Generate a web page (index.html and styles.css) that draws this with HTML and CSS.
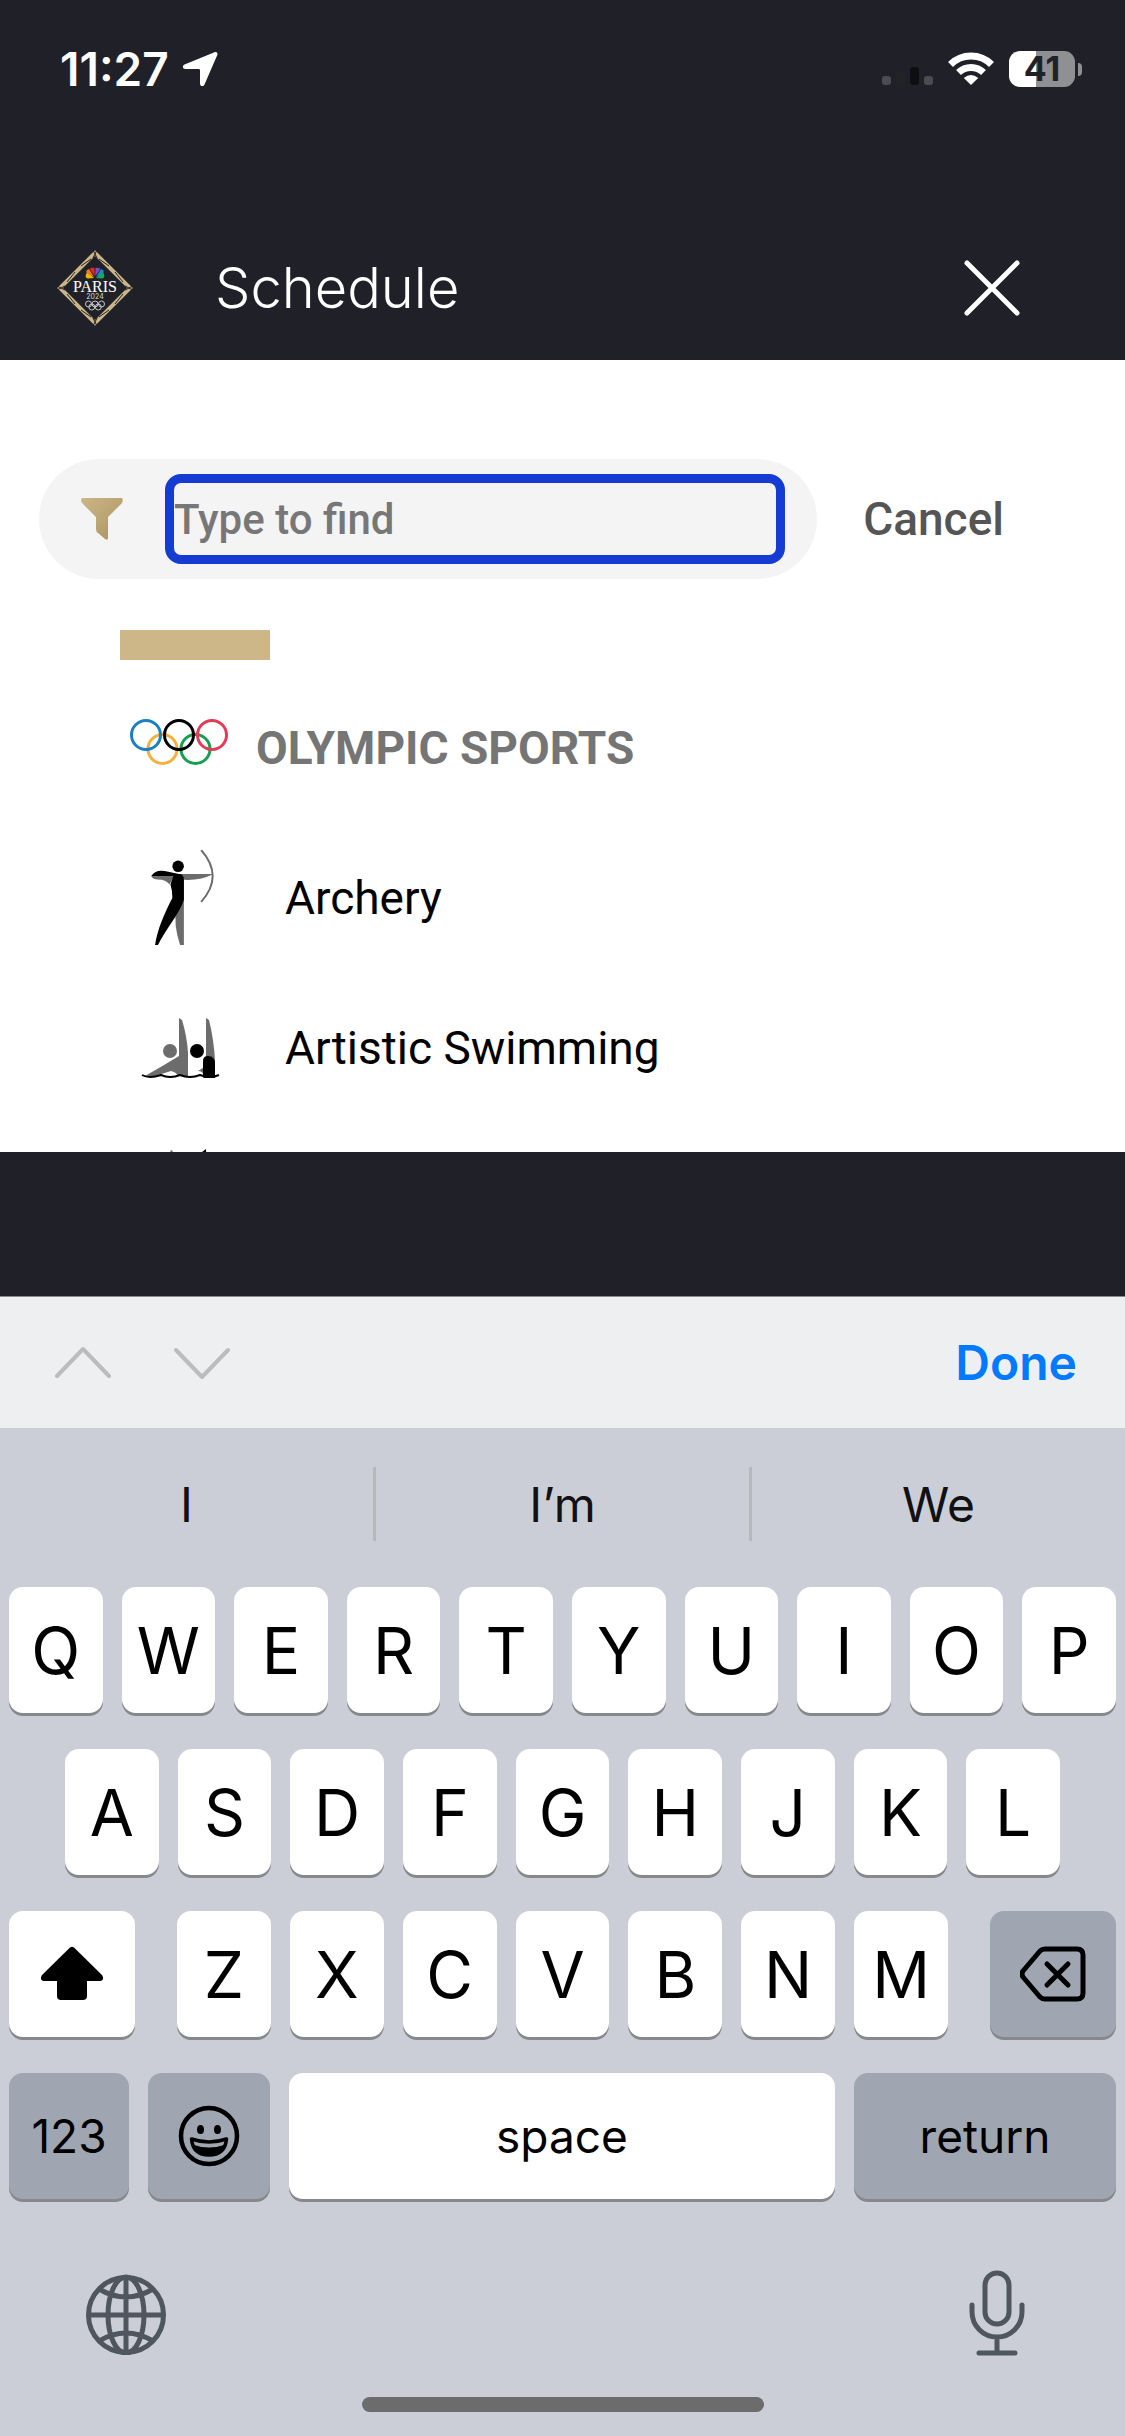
FILE: index.html
```html
<!DOCTYPE html>
<html lang="en">
<head>
    <meta charset="UTF-8">
    <meta name="viewport" content="width=device-width, initial-scale=1.0">
    <title>Schedule</title>
    <link rel="stylesheet" href="styles.css">
</head>
<body>
    <header class="header">
        <div class="status-bar">
            <div class="status-left">
                <span class="time">11:27</span>
                <svg width="38" height="38" viewBox="0 0 38 38" aria-hidden="true">
                    <path d="M33.500 2.200C35.500 1.300 37.200 3 36.300 5L23.500 34.500C22.500 37 19 36.500 19 33.700V20.200Q19 19 17.800 19H4.300C1.500 19 1 15.500 3.500 14.500Z" fill="#fff"/>
                </svg>
            </div>
            <div class="status-right">
                <svg width="54" height="36" viewBox="0 0 54 36" aria-hidden="true">
                    <rect x="0" y="25" width="9" height="9" rx="3" fill="#4b4b50"/>
                    <rect x="14" y="20" width="9" height="14" rx="3" fill="#222227"/>
                    <rect x="28" y="16" width="9" height="18" rx="3" fill="#0e0f13"/>
                    <rect x="42" y="25" width="9" height="9" rx="3" fill="#4b4b50"/>
                </svg>
                <svg class="wifi" width="46" height="36" viewBox="0 0 46 36" aria-hidden="true">
                    <g fill="none" stroke="#fff" stroke-width="7">
                        <path d="M2.500 13.500A29 29 0 0 1 43.500 13.500"/>
                        <path d="M10.500 21.500A18 18 0 0 1 35.500 21.500"/>
                    </g>
                    <path d="M23 34L15.800 27Q23 21 30.200 27Z" fill="#fff"/>
                </svg>
                <div class="battery"><span>41</span></div>
                <div class="battery-cap"></div>
            </div>
        </div>
        <div class="title-bar">
            <svg class="logo" width="76" height="76" viewBox="0 0 76 76" role="img" aria-label="NBC Paris 2024">
                <path d="M38 3L73 38L38 73L3 38Z" fill="none" stroke="#c9b587" stroke-width="4"/>
                <g fill="none" stroke="#202128" stroke-width="1">
                    <path d="M24 16L34 9M52 16L42 9M10 32L18 22M66 32L58 22M10 44L18 54M66 44L58 54M24 60L34 67M52 60L42 67"/>
                    <path d="M36 0L40 8M40 0L36 8M36 76L40 68M40 76L36 68M0 36L8 40M0 40L8 36M76 36L68 40M76 40L68 36"/>
                </g>
                <path d="M37 28L30 22Q27 28 31 28.500Z" fill="#f4b400"/>
                <path d="M37 27L32 19Q27 21 31 24Z" fill="#ef7a1a"/>
                <path d="M37.700 26L37.500 18Q31 17 34 21Z" fill="#e1262f"/>
                <path d="M38.300 26L38.500 18Q45 17 42 21Z" fill="#7950c4"/>
                <path d="M39 27L44 19Q49 21 45 24Z" fill="#1689d8"/>
                <path d="M39 28L46 22Q49 28 45 28.500Z" fill="#19aa57"/>
                <text class="logo-name" x="38" y="42" text-anchor="middle">PARIS</text>
                <text class="logo-year" x="38" y="49" text-anchor="middle">2024</text>
                <g fill="none" stroke="#c7c7ca" stroke-width="1">
                    <circle cx="31.500" cy="54" r="3"/>
                    <circle cx="38" cy="54" r="3"/>
                    <circle cx="44.500" cy="54" r="3"/>
                    <circle cx="34.800" cy="57" r="3"/>
                    <circle cx="41.300" cy="57" r="3"/>
                </g>
            </svg>
            <h1>Schedule</h1>
            <button class="close" aria-label="Close">
                <svg width="56" height="56" viewBox="0 0 56 56"><path d="M3 3L53 53M53 3L3 53" stroke="#fff" stroke-width="5" stroke-linecap="round"/></svg>
            </button>
        </div>
    </header>

    <main class="panel">
        <div class="search-row">
            <div class="search">
                <svg width="42" height="42" viewBox="0 0 42 42" aria-hidden="true">
                    <defs>
                        <linearGradient id="gold" x1="0" y1="0" x2="1" y2="1">
                            <stop offset="0" stop-color="#cdb687"/>
                            <stop offset="1" stop-color="#a8945f"/>
                        </linearGradient>
                    </defs>
                    <path d="M1 0H41Q42.500 2 41 5L27 19V40Q27 43 24 41L17 35Q15 34 15 31V19L1 5Q-1 2 1 0Z" fill="url(#gold)"/>
                </svg>
                <input type="text" placeholder="Type to find" aria-label="Type to find">
            </div>
            <button class="cancel">Cancel</button>
        </div>
        <div class="accent"></div>
        <div class="group">
            <svg width="98" height="48" viewBox="0 0 98 48" fill="none" stroke-width="3" aria-hidden="true">
                <circle cx="32.500" cy="31" r="14.500" stroke="#f4af3d"/>
                <circle cx="65.500" cy="31" r="14.500" stroke="#169f50"/>
                <circle cx="16" cy="17" r="14.500" stroke="#1b80c0"/>
                <circle cx="49" cy="17" r="14.500" stroke="#000"/>
                <circle cx="82" cy="17" r="14.500" stroke="#e23d58"/>
            </svg>
            <h2>OLYMPIC SPORTS</h2>
        </div>
        <ul class="sports">
            <li>
                <svg width="80" height="96" viewBox="0 0 80 100" aria-hidden="true">
                    <path d="M35 25L74 25Q60 32 43 31V99H39Q32 78 35 60Z" fill="#6c6c6c"/>
                    <path d="M9 27H33L28 36Q25 32 20 31Q10 31 9 27Z" fill="#6c6c6c"/>
                    <path d="M61 0Q85 27 61 54" fill="none" stroke="#6c6c6c" stroke-width="2"/>
                    <circle cx="37" cy="17" r="6" fill="#000"/>
                    <path d="M9 27Q14 20 23 22L38 25Q43 25 43 31V52C38 67 23 84 16 99H13C15 84 23 65 31 50Q31 42 29 36L32 27Z" fill="#000"/>
                </svg>
                <a href="#archery">Archery</a>
            </li>
            <li>
                <svg width="80" height="60" viewBox="0 0 80 60" aria-hidden="true">
                    <circle cx="29" cy="33" r="7" fill="#6c6c6c"/>
                    <path d="M38 0L41 2Q46 18 47 35V58H37Q35 54 30 53L14 58H4Q20 49 38 38Z" fill="#6c6c6c"/>
                    <circle cx="56" cy="33" r="7" fill="#000"/>
                    <path d="M65 0L68 2Q73 22 74 43V58H63Q62 53 57 53L65 48Z" fill="#6c6c6c"/>
                    <path d="M62 59V43Q62 38 67 38Q74 38 74 46V60H63Z" fill="#000"/>
                    <path d="M1 57Q8 61 20 57Q29 61 39 57Q49 61 59 57Q69 61 78 57" fill="none" stroke="#000" stroke-width="2"/>
                </svg>
                <a href="#artistic-swimming">Artistic Swimming</a>
            </li>
            <li>
                <svg width="80" height="98" viewBox="0 0 80 98" aria-hidden="true">
                    <path d="M29 2L31 1L33 6Z" fill="#6c6c6c"/>
                    <path d="M61 3L65 0L66 20L60 20Z" fill="#000"/>
                </svg>
            </li>
        </ul>
    </main>

    <section class="keyboard" aria-label="Keyboard">
        <div class="toolbar">
            <button aria-label="Previous field"><svg width="56" height="36" viewBox="0 0 56 36"><path d="M2 31L28 4L54 31"/></svg></button>
            <button aria-label="Next field"><svg width="56" height="36" viewBox="0 0 56 36"><path d="M2 5L28 32L54 5"/></svg></button>
            <button class="done">Done</button>
        </div>
        <div class="suggestions">
            <button>I</button>
            <button>I’m</button>
            <button>We</button>
        </div>
        <div class="keys">
            <div class="row">
                <button>Q</button><button>W</button><button>E</button><button>R</button><button>T</button><button>Y</button><button>U</button><button>I</button><button>O</button><button>P</button>
            </div>
            <div class="row row-home">
                <button>A</button><button>S</button><button>D</button><button>F</button><button>G</button><button>H</button><button>J</button><button>K</button><button>L</button>
            </div>
            <div class="row">
                <button class="shift" aria-label="Shift">
                    <svg width="64" height="56" viewBox="0 0 64 56"><path d="M30 1.500Q32 0 34 1.500L62 29Q65 34 60 35H47V50Q47 54 43 54H21Q17 54 17 50V35H4Q-1 34 2 29Z"/></svg>
                </button>
                <button>Z</button><button>X</button><button>C</button><button>V</button><button>B</button><button>N</button><button>M</button>
                <button class="delete gray" aria-label="Delete">
                    <svg width="66" height="56" viewBox="0 0 66 56" fill="none" stroke="#000" stroke-width="5" stroke-linecap="round" stroke-linejoin="round">
                        <path d="M25 3H57Q63 3 63 9V47Q63 53 57 53H25Q22 53 20 51L3 31Q1 28 3 25L20 5Q22 3 25 3Z"/>
                        <path d="M27 18L48 39M48 18L27 39"/>
                    </svg>
                </button>
            </div>
            <div class="row row-bottom">
                <button class="numbers gray">123</button>
                <button class="emoji gray" aria-label="Emoji">
                    <svg width="62" height="62" viewBox="0 0 62 62">
                        <circle cx="31" cy="31" r="28" fill="none" stroke="#000" stroke-width="4.500"/>
                        <ellipse cx="22.500" cy="24.500" rx="3.500" ry="4.500"/>
                        <ellipse cx="39.500" cy="24.500" rx="3.500" ry="4.500"/>
                        <path d="M13.500 34Q31 40 48.500 34Q47 50 31 50Q15 50 13.500 34Z" fill="none" stroke="#000" stroke-width="3.500" stroke-linejoin="round"/>
                        <path d="M16 40Q31 45 46 40Q42 50 31 50Q20 50 16 40Z"/>
                    </svg>
                </button>
                <button class="space">space</button>
                <button class="return gray">return</button>
            </div>
        </div>
        <div class="dock">
            <button aria-label="Next keyboard">
                <svg width="80" height="84" viewBox="0 0 80 84">
                    <circle cx="40" cy="44" r="37.500"/>
                    <ellipse cx="40" cy="44" rx="18" ry="38"/>
                    <path d="M40 6V82M2 44H78M13 18Q40 34 67 18M13 70Q40 54 67 70"/>
                </svg>
            </button>
            <button aria-label="Dictation">
                <svg width="56" height="86" viewBox="0 0 56 86" stroke-linecap="round">
                    <rect x="16" y="3" width="24" height="51" rx="12"/>
                    <path d="M3 35V42A25 25 0 0 0 53 42V35M28 67V83M10 83H46"/>
                </svg>
            </button>
        </div>
        <div class="home-indicator"></div>
    </section>
</body>
</html>
```

FILE: styles.css
```css
/* Basic Setup */
* {
    box-sizing: border-box;
}

body {
    margin: 0;
    background-color: #202128;
    font-family: Inter, "Liberation Sans", sans-serif;
    color: #000;
}

button {
    padding: 0;
    border: none;
    background: none;
    color: inherit;
    font: inherit;
    cursor: pointer;
}

svg {
    display: block;
    flex: none;
}

/* Header */
.header {
    color: #fff;
}

.status-bar {
    display: flex;
    justify-content: space-between;
    align-items: center;
    height: 138px;
    padding: 0 43px 0 60px;
}

.status-left,
.status-right {
    display: flex;
    align-items: center;
}

.status-left {
    gap: 12px;
}

.time {
    font-size: 46px;
    font-weight: 600;
}

.wifi {
    margin: 0 15px 0 12px;
}

.battery {
    width: 66px;
    height: 36px;
    border-radius: 11px;
    background: linear-gradient(90deg, #fff 27px, #8f9094 27px);
    color: #202128;
    font-size: 34px;
    font-weight: 700;
    line-height: 36px;
    text-align: center;
}

.battery-cap {
    width: 4px;
    height: 13px;
    margin-left: 3px;
    border-radius: 0 4px 4px 0;
    background-color: #8f9094;
}

.title-bar {
    display: flex;
    align-items: center;
    height: 222px;
    padding: 78px 105px 0 57px;
}

.logo-name {
    font-family: "Liberation Serif", serif;
    font-size: 16px;
    fill: #fff;
}

.logo-year {
    font-size: 7px;
    fill: #d9d9dc;
}

h1 {
    margin: 0 auto 0 82px;
    font-size: 56px;
    font-weight: 300;
}

/* Search panel */
.panel {
    height: 792px;
    padding: 99px 39px 0;
    overflow: hidden;
    background-color: #fff;
    font-family: Roboto, "Liberation Sans", sans-serif;
}

.search-row {
    display: flex;
    align-items: center;
    gap: 46px;
    padding-right: 82px;
}

.search {
    display: flex;
    flex: 1;
    align-items: center;
    gap: 42px;
    height: 120px;
    padding: 0 32px 0 42px;
    border-radius: 60px;
    background-color: #f4f4f4;
}

.search input {
    flex: 1;
    min-width: 0;
    height: 90px;
    padding: 0;
    border: 9px solid #153bd2;
    border-radius: 16px;
    outline: none;
    background: transparent;
    font-family: inherit;
    font-size: 42px;
    font-weight: 500;
}

.search input::placeholder {
    color: #777;
    opacity: 1;
}

.cancel {
    color: #555;
    font-size: 46px;
    font-weight: 500;
}

.accent {
    width: 150px;
    height: 30px;
    margin: 51px 0 0 81px;
    background-color: #cdb687;
}

.group {
    display: flex;
    align-items: center;
    gap: 28px;
    height: 163px;
    padding-left: 91px;
}

h2 {
    margin: 0;
    padding-top: 12px;
    color: #757575;
    font-size: 46px;
    font-weight: 700;
}

.sports {
    margin: 0;
    padding: 0;
    list-style: none;
}

.sports li {
    display: flex;
    align-items: center;
    gap: 64px;
    height: 150px;
    padding-left: 102px;
}

.sports a {
    color: #000;
    font-size: 46px;
    text-decoration: none;
}

/* Keyboard */
.keyboard {
    margin-top: 144px;
    padding-bottom: 24px;
    background-color: #cbced7;
}

.toolbar {
    display: flex;
    align-items: center;
    gap: 63px;
    height: 132px;
    padding: 0 48px 0 55px;
    border-top: 1px solid #88898c;
    background-color: #edeff1;
}

.toolbar svg {
    fill: none;
    stroke: #babcbd;
    stroke-width: 4;
    stroke-linecap: round;
    stroke-linejoin: round;
}

.done {
    margin-left: auto;
    color: #007aff;
    font-size: 48px;
    font-weight: 600;
}

.suggestions {
    display: flex;
    height: 74px;
    margin: 39px 0 46px;
    font-size: 48px;
}

.suggestions button {
    flex: 1;
    color: #111;
}

.suggestions button + button {
    border-left: 3px solid #b6b8bc;
}

.keys {
    display: grid;
    gap: 36px;
    padding: 0 9px;
}

.row {
    display: flex;
    gap: 19px;
    height: 126px;
}

.row-home {
    padding: 0 56px;
}

.row button {
    display: flex;
    flex: 1;
    align-items: center;
    justify-content: center;
    border-radius: 14px;
    background-color: #fff;
    box-shadow: 0 3px 0 #86888c;
    font-size: 64px;
}

.row .shift,
.row .delete {
    flex: 0 0 126px;
}

.row .shift {
    margin-right: 23px;
}

.row .delete {
    margin-left: 23px;
}

.row .gray {
    background-color: #9fa6b2;
}

.row.row-bottom button {
    font-size: 46px;
}

.row .numbers {
    flex: 0 0 120px;
}

.row .emoji {
    flex: 0 0 122px;
}

.row .return {
    flex: 0 0 262px;
}

.dock {
    display: flex;
    justify-content: space-between;
    padding: 71px 100px 0 86px;
}

.dock svg {
    fill: none;
    stroke: #50565f;
    stroke-width: 5;
}

.home-indicator {
    width: 402px;
    height: 15px;
    margin: 41px auto 0;
    border-radius: 8px;
    background-color: #6b6c6b;
}
```
